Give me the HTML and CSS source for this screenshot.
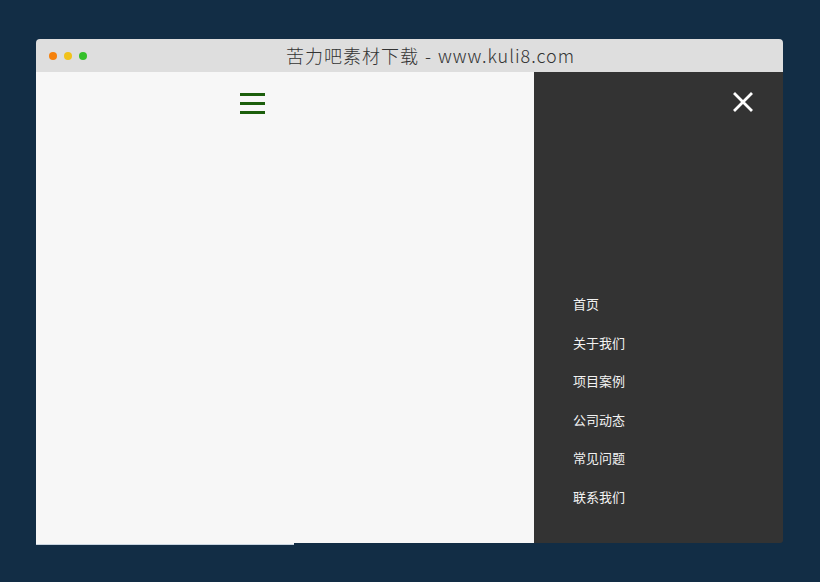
FILE: index.html
```html
<!DOCTYPE html>
<html lang="zh-CN">
<head>
  <meta charset="UTF-8" />
  <meta name="viewport" content="width=device-width, initial-scale=1.0" />
  <title>苦力吧素材下载</title>
  <link rel="stylesheet" href="styles.css">
</head>
<body>
  <div class="window">
    <div class="title-bar">
      <div class="dots">
        <span class="dot orange"></span>
        <span class="dot yellow"></span>
        <span class="dot green"></span>
      </div>
      <div class="title">苦力吧素材下载 - www.kuli8.com</div>
    </div>
    <div class="content">
      <div class="main">
        <div class="menu-toggle" title="Menu">
          <span></span><span></span><span></span>
        </div>
      </div>
      <div class="side-panel">
        <div class="close-row">
          <svg class="close" width="22" height="22" viewBox="0 0 22 22">
            <path d="M3 3 L19 19 M19 3 L3 19" stroke="#fff" stroke-width="2.8" stroke-linecap="square" />
          </svg>
        </div>
        <ul class="nav">
          <li>首页</li>
          <li>关于我们</li>
          <li>项目案例</li>
          <li>公司动态</li>
          <li>常见问题</li>
          <li>联系我们</li>
        </ul>
      </div>
    </div>
  </div>
</body>
</html>
```

FILE: styles.css
```css
html, body {
  height: 100%;
  overflow: hidden;
}
body {
  margin: 0;
  padding: 39px 0 0 36px;
  box-sizing: border-box;
  background: #122d45;
  font-family: "Noto Sans CJK SC", "Noto Sans", sans-serif;
}
.window {
  width: 747px;
  height: 504px;
  display: flex;
  flex-direction: column;
}
.title-bar {
  height: 33px;
  flex-shrink: 0;
  background: #dedede;
  border-radius: 4px 4px 0 0;
  display: flex;
  align-items: center;
  padding-left: 13px;
}
.dots {
  display: flex;
  gap: 7px;
}
.dot {
  width: 8px;
  height: 8px;
  border-radius: 50%;
}
.dot.orange { background: #f5810c; }
.dot.yellow { background: #f1c21b; }
.dot.green { background: #34c02a; }
.title {
  margin-left: 199px;
  font-size: 18px;
  color: #333;
  font-weight: 300;
  letter-spacing: 1px;
  word-spacing: 1px;
  line-height: 33px;
}
.content {
  flex: 1;
  display: flex;
}
.main {
  position: relative;
  width: 498px;
  background: #f7f7f7;
  padding: 20px 0 0 204px;
  box-sizing: border-box;
}
.main::after {
  content: "";
  position: absolute;
  left: 0;
  bottom: -2px;
  width: 258px;
  height: 2px;
  background: #f7f7f7;
  border-bottom: 1px solid #c8d4e0;
}
.menu-toggle {
  width: 25px;
  display: flex;
  flex-direction: column;
  gap: 6px;
  padding-top: 1px;
  cursor: pointer;
}
.menu-toggle span {
  height: 3px;
  background: #1c5e0c;
}
.side-panel {
  flex: 1;
  background: #333;
  border-radius: 0 0 3px 0;
  display: flex;
  flex-direction: column;
}
.close-row {
  display: flex;
  justify-content: flex-end;
  padding: 19px 29px 0 0;
}
.close {
  display: block;
  cursor: pointer;
}
.nav {
  list-style: none;
  margin: 172px 0 0;
  padding: 0 0 0 39px;
}
.nav li {
  height: 38.5px;
  line-height: 37.5px;
  font-size: 13px;
  color: #f2f2f2;
  cursor: pointer;
}
```
